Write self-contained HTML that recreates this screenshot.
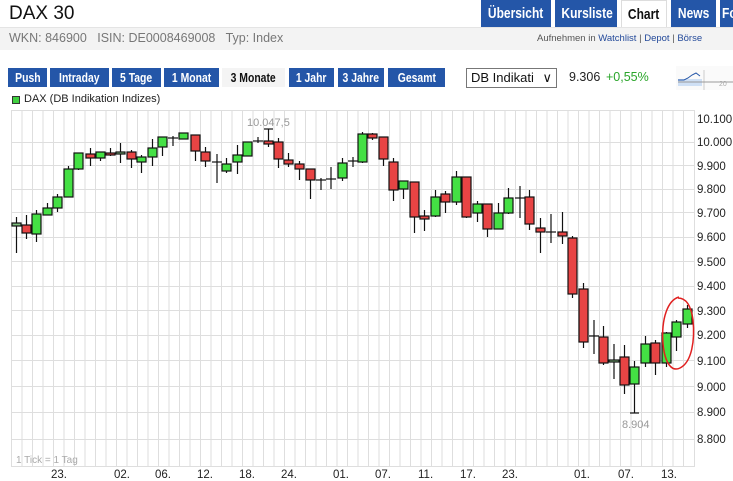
<!DOCTYPE html>
<html><head><meta charset="utf-8"><style>
*{margin:0;padding:0;box-sizing:border-box}
body{width:733px;height:481px;overflow:hidden;background:#fff;font-family:"Liberation Sans",Arial,sans-serif;position:relative}
.a{position:absolute;white-space:nowrap}
.tab{position:absolute;top:0;height:27px;background:#2456a8;color:#fff;font-weight:bold;font-size:15px;line-height:28px;text-align:center;overflow:hidden}
.btn{position:absolute;top:68px;height:19px;background:#2456a8;color:#fff;font-weight:bold;font-size:13px;line-height:19px;text-align:center;overflow:hidden}
.n{display:inline-block;transform:scaleX(0.8);transform-origin:center}
</style></head><body>
<div class="a" style="left:9px;top:3px;font-size:19px;color:#111">DAX 30</div>
<div class="tab" style="left:481px;width:70px"><span class="n">Übersicht</span></div>
<div class="tab" style="left:555px;width:62px"><span class="n">Kursliste</span></div>
<div class="tab" style="left:621px;width:46px;background:#fff;color:#111;border:1px solid #ddd;border-bottom:none"><span class="n">Chart</span></div>
<div class="tab" style="left:671px;width:45px"><span class="n">News</span></div>
<div class="tab" style="left:720px;width:20px;text-align:left;padding-left:2px"><span class="n" style="transform-origin:left">Fo</span></div>
<div class="a" style="left:0;top:27px;width:733px;height:23px;background:#f3f3f3;border-top:1px solid #e4e4e4"></div>
<div class="a" style="left:9px;top:31px;font-size:12.5px;color:#777">WKN: 846900&nbsp;&nbsp; ISIN: DE0008469008&nbsp;&nbsp; Typ: Index</div>
<div class="a" style="left:537px;top:33px;font-size:9.5px;color:#555">Aufnehmen in <span style="color:#244a9a">Watchlist</span> | <span style="color:#244a9a">Depot</span> | <span style="color:#244a9a">Börse</span></div>
<div class="btn" style="left:8px;width:39px"><span class="n">Push</span></div>
<div class="btn" style="left:50px;width:59px"><span class="n">Intraday</span></div>
<div class="btn" style="left:112px;width:49px"><span class="n">5 Tage</span></div>
<div class="btn" style="left:164px;width:55px"><span class="n">1 Monat</span></div>
<div class="btn" style="left:222px;width:63px;background:#f4f4f4;color:#111"><span class="n">3 Monate</span></div>
<div class="btn" style="left:289px;width:45px"><span class="n">1 Jahr</span></div>
<div class="btn" style="left:338px;width:46px"><span class="n">3 Jahre</span></div>
<div class="btn" style="left:388px;width:57px"><span class="n">Gesamt</span></div>
<div class="a" style="left:466px;top:68px;width:91px;height:20px;border:1px solid #777;font-size:13px;line-height:18px;padding-left:4px;color:#111">DB Indikati <span style="position:absolute;right:4px;top:0">∨</span></div>
<div class="a" style="left:569px;top:70px;font-size:12.5px;color:#222">9.306</div>
<div class="a" style="left:606px;top:70px;font-size:12.5px;color:#2aa52a">+0,55%</div>
<svg class="a" style="left:676px;top:66px" width="57" height="24"><rect x="0" y="0" width="57" height="24" fill="#fafafa"/><line x1="28" y1="4" x2="28" y2="24" stroke="#ccc"/><rect x="2" y="13" width="24" height="7" fill="#cfe0f5"/><path d="M2 14 L8 14 L12 12 L16 9 L20 7 L24 10" stroke="#2456a8" fill="none"/><line x1="2" y1="16" x2="57" y2="16" stroke="#999"/><text x="43" y="20" font-size="7" fill="#aaa">20</text></svg>
<div class="a" style="left:12px;top:96px;width:8px;height:8px;background:#40d040;border:1px solid #333"></div>
<div class="a" style="left:24px;top:93px;font-size:11px;color:#222">DAX (DB Indikation Indizes)</div>
<svg class="a" style="left:0;top:0" width="733" height="481">
<g stroke="#dedede" stroke-width="1">
<line x1="11" y1="110.5" x2="694" y2="110.5"/>
<line x1="11" y1="142.5" x2="694" y2="142.5"/><line x1="11" y1="165.5" x2="694" y2="165.5"/><line x1="11" y1="189.5" x2="694" y2="189.5"/><line x1="11" y1="212.5" x2="694" y2="212.5"/><line x1="11" y1="237.5" x2="694" y2="237.5"/><line x1="11" y1="261.5" x2="694" y2="261.5"/><line x1="11" y1="286.5" x2="694" y2="286.5"/><line x1="11" y1="310.5" x2="694" y2="310.5"/><line x1="11" y1="335.5" x2="694" y2="335.5"/><line x1="11" y1="360.5" x2="694" y2="360.5"/><line x1="11" y1="386.5" x2="694" y2="386.5"/><line x1="11" y1="412.5" x2="694" y2="412.5"/><line x1="11" y1="439.5" x2="694" y2="439.5"/><line x1="11" y1="466.5" x2="694" y2="466.5"/>
<path d="M11.5 110V467M22 110V467M32.5 110V467M43 110V467M53.5 110V467M64 110V467M74.5 110V467M85 110V467M95.5 110V467M106 110V467M116.5 110V467M127 110V467M137.5 110V467M148 110V467M158.5 110V467M169 110V467M179.5 110V467M190 110V467M200.5 110V467M211 110V467M221.5 110V467M232 110V467M242.5 110V467M253 110V467M263.5 110V467M274 110V467M284.5 110V467M295 110V467M305.5 110V467M316 110V467M326.5 110V467M337 110V467M347.5 110V467M358 110V467M368.5 110V467M379 110V467M389.5 110V467M400 110V467M410.5 110V467M421 110V467M431.5 110V467M442 110V467M452.5 110V467M463 110V467M473.5 110V467M484 110V467M494.5 110V467M505 110V467M515.5 110V467M526 110V467M536.5 110V467M547 110V467M557.5 110V467M568 110V467M578.5 110V467M589 110V467M599.5 110V467M610 110V467M620.5 110V467M631 110V467M641.5 110V467M652 110V467M662.5 110V467M673 110V467M683.5 110V467M694.5 110V467" fill="none"/>
</g>
<g stroke="#111" stroke-width="1.2">
<line x1="16.5" y1="217" x2="16.5" y2="253"/><rect x="12" y="223" width="9" height="3" fill="#80c080"/>
<line x1="26.5" y1="215" x2="26.5" y2="239"/><rect x="22" y="225" width="9" height="8" fill="#e84444"/>
<line x1="36.5" y1="210" x2="36.5" y2="242"/><rect x="32" y="214" width="9" height="20" fill="#44e044"/>
<line x1="47.5" y1="203" x2="47.5" y2="215"/><rect x="43" y="208" width="9" height="7" fill="#44e044"/>
<line x1="57.5" y1="194" x2="57.5" y2="212"/><rect x="53" y="197" width="9" height="11" fill="#44e044"/>
<line x1="68.5" y1="166" x2="68.5" y2="197"/><rect x="64" y="169" width="9" height="28" fill="#44e044"/>
<line x1="78.5" y1="153" x2="78.5" y2="170"/><rect x="74" y="153" width="9" height="16" fill="#44e044"/>
<line x1="90.5" y1="148" x2="90.5" y2="166"/><rect x="86" y="154" width="9" height="4" fill="#e84444"/>
<line x1="100.5" y1="152" x2="100.5" y2="161"/><rect x="96" y="152" width="9" height="6" fill="#44e044"/>
<line x1="110.5" y1="148" x2="110.5" y2="156"/><rect x="106" y="153" width="9" height="2" fill="#e84444"/>
<line x1="120.5" y1="143" x2="120.5" y2="163"/><rect x="116" y="152" width="9" height="2" fill="#80c080"/>
<line x1="131.5" y1="150" x2="131.5" y2="168"/><rect x="127" y="152" width="9" height="7" fill="#e84444"/>
<line x1="141.5" y1="155" x2="141.5" y2="173"/><rect x="137" y="157" width="9" height="5" fill="#44e044"/>
<line x1="152.5" y1="139" x2="152.5" y2="166"/><rect x="148" y="148" width="9" height="9" fill="#44e044"/>
<line x1="162.5" y1="137" x2="162.5" y2="156"/><rect x="158" y="137" width="9" height="10" fill="#44e044"/>
<line x1="173" y1="136" x2="173" y2="146"/><line x1="168" y1="138" x2="178" y2="138"/>
<line x1="183.5" y1="133" x2="183.5" y2="138"/><rect x="179" y="133" width="9" height="6" fill="#44e044"/>
<line x1="195.5" y1="135" x2="195.5" y2="161"/><rect x="191" y="135" width="9" height="16" fill="#e84444"/>
<line x1="205.5" y1="147" x2="205.5" y2="167"/><rect x="201" y="152" width="9" height="9" fill="#e84444"/>
<line x1="217" y1="154" x2="217" y2="183"/><line x1="212" y1="162" x2="222" y2="162"/>
<line x1="226.5" y1="158" x2="226.5" y2="173"/><rect x="222" y="164" width="9" height="7" fill="#44e044"/>
<line x1="237.5" y1="145" x2="237.5" y2="174"/><rect x="233" y="155" width="9" height="7" fill="#44e044"/>
<line x1="247.5" y1="142" x2="247.5" y2="156"/><rect x="243" y="142" width="9" height="14" fill="#44e044"/>
<line x1="258" y1="137" x2="258" y2="143"/><line x1="253" y1="141" x2="263" y2="141"/>
<line x1="268.5" y1="129" x2="268.5" y2="147"/><line x1="264" y1="129" x2="273" y2="129"/><rect x="264" y="141" width="9" height="3" fill="#e84444"/>
<line x1="278.5" y1="138" x2="278.5" y2="168"/><rect x="274" y="142" width="9" height="17" fill="#e84444"/>
<line x1="288.5" y1="153" x2="288.5" y2="167"/><rect x="284" y="160" width="9" height="4" fill="#e84444"/>
<line x1="299.5" y1="161" x2="299.5" y2="180"/><rect x="295" y="164" width="9" height="5" fill="#e84444"/>
<line x1="310.5" y1="169" x2="310.5" y2="199"/><rect x="306" y="169" width="9" height="11" fill="#e84444"/>
<line x1="321" y1="178" x2="321" y2="190"/><line x1="316" y1="180" x2="326" y2="180"/>
<line x1="331" y1="167" x2="331" y2="189"/><line x1="326" y1="179" x2="336" y2="179"/>
<line x1="342.5" y1="158" x2="342.5" y2="181"/><rect x="338" y="163" width="9" height="15" fill="#44e044"/>
<line x1="353" y1="157" x2="353" y2="167"/><line x1="348" y1="161" x2="358" y2="161"/>
<line x1="362.5" y1="132" x2="362.5" y2="163"/><rect x="358" y="134" width="9" height="28" fill="#44e044"/>
<line x1="372.5" y1="133" x2="372.5" y2="140"/><rect x="368" y="134" width="9" height="4" fill="#e84444"/>
<line x1="383.5" y1="137" x2="383.5" y2="166"/><rect x="379" y="137" width="9" height="22" fill="#e84444"/>
<line x1="393.5" y1="158" x2="393.5" y2="201"/><rect x="389" y="162" width="9" height="28" fill="#e84444"/>
<line x1="403.5" y1="181" x2="403.5" y2="199"/><rect x="399" y="181" width="9" height="8" fill="#44e044"/>
<line x1="414.5" y1="182" x2="414.5" y2="233"/><rect x="410" y="182" width="9" height="35" fill="#e84444"/>
<line x1="424.5" y1="210" x2="424.5" y2="231"/><rect x="420" y="216" width="9" height="3" fill="#e84444"/>
<line x1="435.5" y1="190" x2="435.5" y2="217"/><rect x="431" y="197" width="9" height="19" fill="#44e044"/>
<line x1="445.5" y1="191" x2="445.5" y2="213"/><rect x="441" y="194" width="9" height="8" fill="#e84444"/>
<line x1="456.5" y1="171" x2="456.5" y2="205"/><rect x="452" y="177" width="9" height="25" fill="#44e044"/>
<line x1="466.5" y1="177" x2="466.5" y2="218"/><rect x="462" y="177" width="9" height="40" fill="#e84444"/>
<line x1="477.5" y1="201" x2="477.5" y2="222"/><rect x="473" y="204" width="9" height="9" fill="#44e044"/>
<line x1="487.5" y1="204" x2="487.5" y2="237"/><rect x="483" y="204" width="9" height="25" fill="#e84444"/>
<line x1="498.5" y1="203" x2="498.5" y2="229"/><rect x="494" y="213" width="9" height="16" fill="#44e044"/>
<line x1="508.5" y1="188" x2="508.5" y2="214"/><rect x="504" y="198" width="9" height="15" fill="#44e044"/>
<line x1="520" y1="186" x2="520" y2="218"/><line x1="515" y1="198" x2="525" y2="198"/>
<line x1="529.5" y1="190" x2="529.5" y2="230"/><rect x="525" y="197" width="9" height="27" fill="#e84444"/>
<line x1="540.5" y1="218" x2="540.5" y2="253"/><rect x="536" y="228" width="9" height="4" fill="#e84444"/>
<line x1="551" y1="214" x2="551" y2="243"/><line x1="546" y1="232" x2="556" y2="232"/>
<line x1="562.5" y1="212" x2="562.5" y2="244"/><rect x="558" y="232" width="9" height="4" fill="#e84444"/>
<line x1="572.5" y1="236" x2="572.5" y2="298"/><rect x="568" y="238" width="9" height="56" fill="#e84444"/>
<line x1="583.5" y1="283" x2="583.5" y2="348"/><rect x="579" y="289" width="9" height="53" fill="#e84444"/>
<line x1="594" y1="320" x2="594" y2="354"/><line x1="589" y1="336" x2="599" y2="336"/>
<line x1="603.5" y1="326" x2="603.5" y2="365"/><rect x="599" y="337" width="9" height="26" fill="#e84444"/>
<line x1="614" y1="344" x2="614" y2="379"/><rect x="609" y="360" width="10" height="2" fill="#80c080"/>
<line x1="624.5" y1="345" x2="624.5" y2="394"/><rect x="620" y="357" width="9" height="28" fill="#e84444"/>
<line x1="634.5" y1="361" x2="634.5" y2="413"/><line x1="630" y1="413" x2="639" y2="413"/><rect x="630" y="367" width="9" height="17" fill="#44e044"/>
<line x1="645.5" y1="336" x2="645.5" y2="367"/><rect x="641" y="344" width="9" height="19" fill="#44e044"/>
<line x1="655.5" y1="340" x2="655.5" y2="375"/><rect x="651" y="343" width="9" height="20" fill="#e84444"/>
<line x1="666.5" y1="332" x2="666.5" y2="367"/><rect x="662" y="333" width="9" height="30" fill="#44e044"/>
<line x1="676.5" y1="320" x2="676.5" y2="351"/><rect x="672" y="322" width="9" height="15" fill="#44e044"/>
<line x1="687.5" y1="305" x2="687.5" y2="328"/><rect x="683" y="309" width="9" height="15" fill="#44e044"/>
</g>
<path d="M679 297 C668 300 661 318 663 344 C665 364 672 372 680 368 C692 362 695 340 693 320 C691 305 686 298 678 298" stroke="#e02020" stroke-width="1.5" fill="none"/>
<text x="247" y="126" font-size="11" fill="#999" font-family="Liberation Sans">10.047,5</text>
<text x="622" y="428" font-size="11" fill="#999" font-family="Liberation Sans">8.904</text>
<text x="16" y="463" font-size="10" fill="#aaa" font-family="Liberation Sans">1 Tick = 1 Tag</text>
<g font-size="11.5" fill="#222" font-family="Liberation Sans">
<text x="697" y="123">10.100</text><text x="697" y="146">10.000</text><text x="697" y="170">9.900</text><text x="697" y="193">9.800</text><text x="697" y="217">9.700</text><text x="697" y="241">9.600</text><text x="697" y="266">9.500</text><text x="697" y="290">9.400</text><text x="697" y="315">9.300</text><text x="697" y="339">9.200</text><text x="697" y="365">9.100</text><text x="697" y="391">9.000</text><text x="697" y="416">8.900</text><text x="697" y="443">8.800</text>
<text x="51" y="478">23.</text><text x="114" y="478">02.</text><text x="155" y="478">06.</text><text x="197" y="478">12.</text><text x="239" y="478">18.</text><text x="281" y="478">24.</text><text x="333" y="478">01.</text><text x="375" y="478">07.</text><text x="418" y="478">11.</text><text x="460" y="478">17.</text><text x="502" y="478">23.</text><text x="574" y="478">01.</text><text x="618" y="478">07.</text><text x="661" y="478">13.</text>
</g>
</svg>
</body></html>
